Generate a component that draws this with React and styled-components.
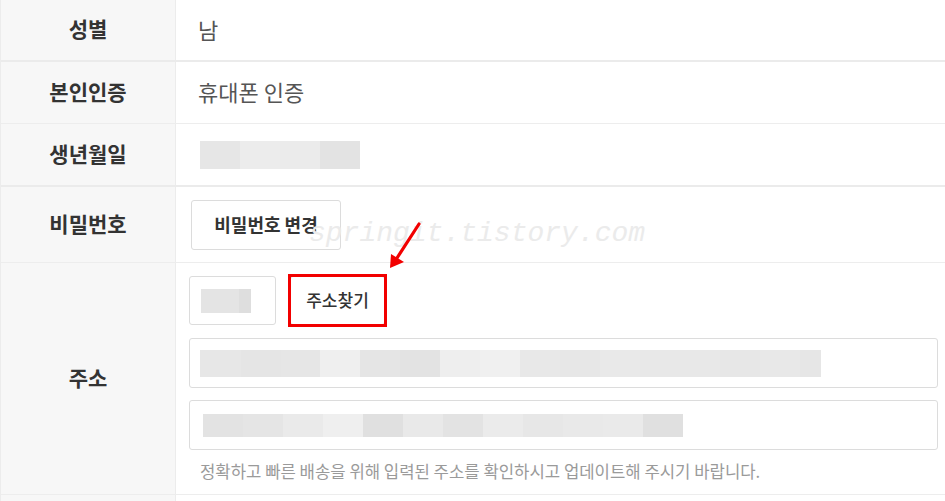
import React from "react";
import styled, { createGlobalStyle } from "styled-components";

const GlobalStyle = createGlobalStyle`
  html, body { margin: 0; padding: 0; background: #fff; }
  body { font-family: "Noto Sans CJK KR", "Noto Sans", sans-serif; }
`;

const Table = styled.div`
  position: relative;
  width: 945px;
  border-left: 1px solid #ececec;
  box-sizing: border-box;
  overflow: hidden;
`;

const Row = styled.div`
  box-sizing: border-box;
  display: flex;
  height: ${(p) => p.$h}px;
  border-bottom: ${(p) =>
    p.$last ? "none" : p.$thick ? "2px solid #ebebeb" : "1px solid #ededed"};
`;

const Label = styled.div`
  width: 175px;
  flex: none;
  background: #f7f7f7;
  border-right: 1px solid #ececec;
  display: flex;
  align-items: center;
  justify-content: center;
  font-size: 21px;
  font-weight: 700;
  color: #333;
  line-height: 1;
  padding-bottom: 3px;
  box-sizing: border-box;
`;

const Value = styled.div`
  flex: 1;
  display: flex;
  align-items: center;
  padding-left: ${(p) => p.$pl ?? 22}px;
  padding-bottom: ${(p) => p.$pb ?? 0}px;
  font-size: 22px;
  color: #555;
  line-height: 1;
`;

const Blur = styled.div`
  display: flex;
  height: ${(p) => p.$h}px;
  flex: none;
`;

const Seg = styled.div`
  width: ${(p) => p.$w}px;
  height: 100%;
  background: ${(p) => p.$c};
`;

const OutlineButton = styled.button`
  box-sizing: border-box;
  width: 150px;
  height: 50px;
  background: #fff;
  border: 1px solid #dcdcdc;
  border-radius: 3px;
  font-family: inherit;
  font-size: 18px;
  font-weight: 700;
  color: #333;
  padding: 0 0 2px;
`;

const AddressCol = styled.div`
  flex: 1;
  display: flex;
  flex-direction: column;
  padding: 13px 7px 0 13px;
`;

const ZipRow = styled.div`
  display: flex;
  align-items: center;
  gap: 14px;
  height: 49px;
`;

const ZipBox = styled.div`
  box-sizing: border-box;
  width: 87px;
  height: 49px;
  border: 1px solid #dcdcdc;
  border-radius: 3px;
  display: flex;
  align-items: center;
  padding-left: 11px;
`;

const FindButton = styled.button`
  position: relative;
  box-sizing: border-box;
  width: 95px;
  height: 49px;
  background: #fff;
  border: 1px solid #dcdcdc;
  border-radius: 3px;
  font-family: inherit;
  font-size: 17px;
  font-weight: 500;
  color: #333;
  padding: 0 0 2px;

  &::after {
    content: "";
    position: absolute;
    left: -3px;
    top: -3px;
    right: -3px;
    bottom: -3px;
    border: 3px solid #f20000;
  }
`;

const InputBox = styled.div`
  box-sizing: border-box;
  height: 50px;
  border: 1px solid #dcdcdc;
  border-radius: 3px;
  display: flex;
  align-items: center;
  padding-left: ${(p) => p.$pl}px;
  margin-top: ${(p) => p.$mt}px;
`;

const Helper = styled.p`
  margin: 10px 0 0 11px;
  font-size: 16.7px;
  line-height: 22px;
  color: #9a9a9a;
  white-space: nowrap;
`;

const Watermark = styled.div`
  position: absolute;
  left: 308px;
  top: 218px;
  font-family: "Liberation Mono", monospace;
  font-style: italic;
  font-size: 28px;
  color: #ebebeb;
  pointer-events: none;
  white-space: nowrap;
`;

const Arrow = styled.svg`
  position: absolute;
  left: 384px;
  top: 220px;
`;

const birth = [
  [40, "#e6e6e6"], [40, "#ececec"], [40, "#ebebeb"], [40, "#e3e3e3"],
];
const zip = [[38, "#e4e4e4"], [12, "#dedede"]];
const addr1 = [
  [41, "#e7e7e7"], [40, "#e5e5e5"], [39, "#e6e6e6"], [40, "#efefef"],
  [40, "#e5e5e5"], [40, "#e3e3e3"], [40, "#eeeeee"], [40, "#f0f0f0"],
  [40, "#e8e8e8"], [40, "#e7e7e7"], [40, "#e9e9e9"], [40, "#e8e8e8"],
  [40, "#e8e8e8"], [40, "#e7e7e7"], [40, "#e8e8e8"], [21, "#e6e6e6"],
];
const addr2 = [
  [40, "#e3e3e3"], [40, "#e5e5e5"], [40, "#eaeaea"], [40, "#efefef"],
  [40, "#e0e0e0"], [40, "#e9e9e9"], [40, "#e3e3e3"], [40, "#ebebeb"],
  [40, "#e7e7e7"], [40, "#e9e9e9"], [40, "#eaeaea"], [40, "#e0e0e0"],
];

const Mosaic = ({ segs, h }) => (
  <Blur $h={h}>
    {segs.map(([w, c], i) => (
      <Seg key={i} $w={w} $c={c} />
    ))}
  </Blur>
);

export default function App() {
  return (
    <>
      <GlobalStyle />
      <Table>
        <Row $h={62} $thick>
          <Label>성별</Label>
          <Value $pb={3}>남</Value>
        </Row>
        <Row $h={62}>
          <Label>본인인증</Label>
          <Value $pb={3}>휴대폰 인증</Value>
        </Row>
        <Row $h={63} $thick>
          <Label>생년월일</Label>
          <Value $pl={24}>
            <Mosaic segs={birth} h={28} />
          </Value>
        </Row>
        <Row $h={76}>
          <Label>비밀번호</Label>
          <Value $pl={15}>
            <OutlineButton>비밀번호 변경</OutlineButton>
          </Value>
        </Row>
        <Row $h={232}>
          <Label>주소</Label>
          <AddressCol>
            <ZipRow>
              <ZipBox>
                <Mosaic segs={zip} h={24} />
              </ZipBox>
              <FindButton>주소찾기</FindButton>
            </ZipRow>
            <InputBox $pl={10} $mt={13}>
              <Mosaic segs={addr1} h={27} />
            </InputBox>
            <InputBox $pl={13} $mt={12}>
              <Mosaic segs={addr2} h={23} />
            </InputBox>
            <Helper>정확하고 빠른 배송을 위해 입력된 주소를 확인하시고 업데이트해 주시기 바랍니다.</Helper>
          </AddressCol>
        </Row>
        <Row $h={6} $last>
          <Label />
          <Value />
        </Row>
        <Watermark>springit.tistory.com</Watermark>
        <Arrow width="40" height="52" viewBox="0 0 40 52">
          <line x1="34" y1="4" x2="12" y2="38" stroke="#f20000" strokeWidth="3.2" strokeLinecap="round" />
          <polygon points="5,48 6,34 19,42" fill="#f20000" />
        </Arrow>
      </Table>
    </>
  );
}
